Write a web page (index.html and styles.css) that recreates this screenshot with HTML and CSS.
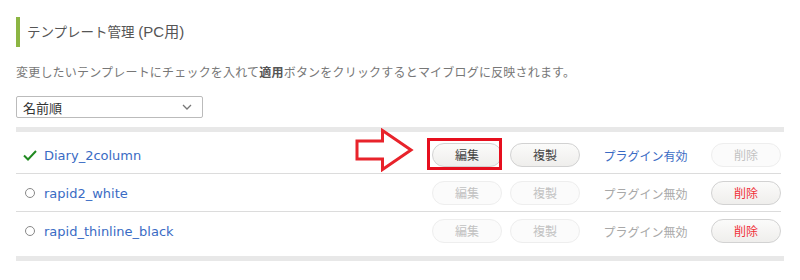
FILE: index.html
```html
<!DOCTYPE html>
<html lang="ja">
<head>
<meta charset="utf-8">
<link rel="stylesheet" href="styles.css">
</head>
<body>
<div class="page">
  <h1 class="title">テンプレート管理 <span class="title-sub">(PC用)</span></h1>
  <p class="desc">変更したいテンプレートにチェックを入れて<b>適用</b>ボタンをクリックするとマイブログに反映されます。</p>
  <div class="select">
    <span>名前順</span>
    <svg class="chev" width="10" height="6" viewBox="0 0 10 6"><path d="M1 1 L5 5 L9 1" fill="none" stroke="#777" stroke-width="1.3"/></svg>
  </div>
  <div class="list">
    <div class="row">
      <span class="mark"><svg width="14" height="11" viewBox="0 0 14 11"><path d="M1 5.5 L5 9.5 L13 1" fill="none" stroke="#218a21" stroke-width="2"/></svg></span>
      <a class="name">Diary_2column</a>
      <span class="btn">編集</span>
      <span class="btn gap">複製</span>
      <span class="plugin on">プラグイン有効</span>
      <span class="btn off">削除</span>
    </div>
    <div class="row">
      <span class="mark"><span class="radio"></span></span>
      <a class="name">rapid2_white</a>
      <span class="btn off">編集</span>
      <span class="btn off gap">複製</span>
      <span class="plugin">プラグイン無効</span>
      <span class="btn del">削除</span>
    </div>
    <div class="row">
      <span class="mark"><span class="radio"></span></span>
      <a class="name">rapid_thinline_black</a>
      <span class="btn off">編集</span>
      <span class="btn off gap">複製</span>
      <span class="plugin">プラグイン無効</span>
      <span class="btn del">削除</span>
    </div>
  </div>
  <svg class="arrow" width="60" height="44" viewBox="0 0 60 44"><path d="M2 13 L27.5 13 L27.5 2.5 L56 22 L27.5 41.5 L27.5 31 L2 31 Z" fill="#fff" stroke="#e8232b" stroke-width="3" stroke-linejoin="miter"/></svg>
  <div class="highlight"></div>
</div>
</body>
</html>
```

FILE: styles.css
```css
html, body {
  margin: 0;
  padding: 0;
  background: #fff;
}
.page {
  position: relative;
  padding: 17px 16px 0 16px;
  font-family: "Noto Sans CJK JP", "Liberation Sans", sans-serif;
  color: #555;
}
.title {
  margin: 0;
  height: 30px;
  line-height: 30px;
  border-left: 4px solid #8cb543;
  padding-left: 7px;
  font-size: 13.5px;
  font-weight: normal;
  color: #555;
  font-family: "Liberation Sans", "Noto Sans CJK JP", sans-serif;
}
.title-sub {
  font-size: 15px;
}
.desc {
  margin: 15px 0 0 0;
  font-size: 12px;
  line-height: 20px;
  letter-spacing: 0.2px;
  color: #777;
}
.desc b {
  color: #555;
}
.select {
  margin-top: 14px;
  height: 20px;
  border: 1px solid #bbb;
  border-radius: 2px;
  display: flex;
  align-items: center;
  justify-content: space-between;
  padding: 0 10px 0 6px;
  width: 169px;
  font-size: 13px;
  color: #333;
}
.list {
  margin-top: 9px;
  border-top: 5px solid #e8e8e8;
  border-bottom: 5px solid #e8e8e8;
  padding: 4px 3px 7px 0;
}
.row {
  display: flex;
  align-items: center;
  padding: 7px 0 6px 0;
  border-bottom: 1px solid #dcdcdc;
}
.row:last-child {
  border-bottom: none;
}
.mark {
  width: 28px;
  display: flex;
  justify-content: center;
}
.radio {
  width: 8px;
  height: 8px;
  border: 1.5px solid #888;
  border-radius: 50%;
}
.name {
  flex: 1;
  font-family: "DejaVu Sans", Verdana, sans-serif;
  font-size: 13px;
  color: #3a6bc4;
}
.btn {
  width: 68px;
  height: 22px;
  line-height: 22px;
  border: 1px solid #d2d2d2;
  border-radius: 12px;
  background: linear-gradient(#fbfbfa, #efeeec);
  text-align: center;
  font-size: 12px;
  color: #444;
}
.btn.gap {
  margin-left: 8px;
}
.btn.off {
  background: #fbfbfb;
  border-color: #eeeeee;
  color: #c2c2c2;
}
.btn.del {
  color: #f0303a;
}
.plugin {
  width: 131px;
  text-align: center;
  font-size: 12px;
  color: #a8a8a8;
}
.plugin.on {
  color: #3a6bc4;
}
.arrow {
  position: absolute;
  left: 355px;
  top: 128px;
}
.highlight {
  position: absolute;
  left: 427px;
  top: 138px;
  width: 69px;
  height: 26px;
  border: 3px solid #e60f1e;
}
```
